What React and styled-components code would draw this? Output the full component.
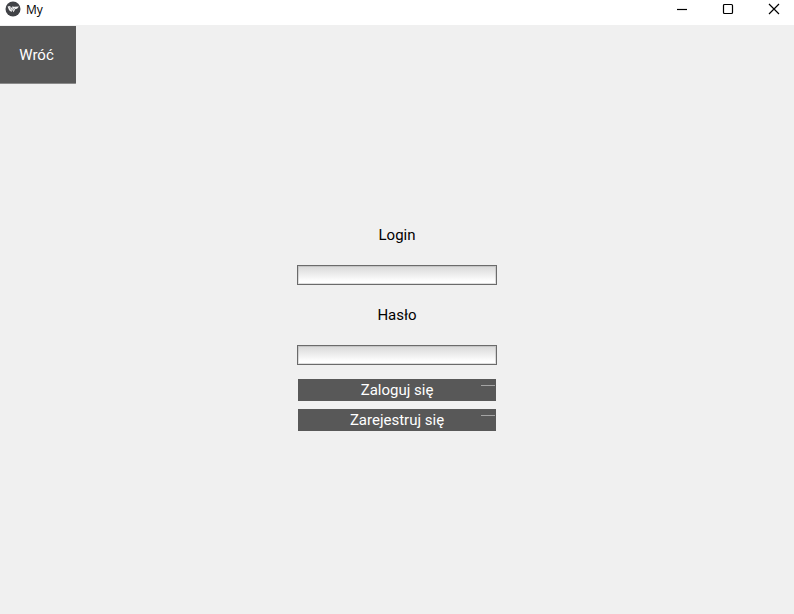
import React from "react";
import styled, { createGlobalStyle } from "styled-components";

const GlobalStyle = createGlobalStyle`
  * { box-sizing: border-box; }
  body {
    margin: 0;
    background: #f0f0f0;
    color: #000;
    font: 15px/20px Roboto, sans-serif;
  }
  button, input { font: inherit; }
`;

const Window = styled.div`
  display: flex;
  flex-direction: column;
  min-height: 100vh;
`;

const TitleBar = styled.header`
  display: flex;
  align-items: flex-start;
  justify-content: space-between;
  height: 25px;
  overflow: hidden;
  background: #fff;
`;

const AppName = styled.div`
  display: flex;
  align-items: center;
  gap: 5px;
  padding-left: 5px;
  font: 12px/20px "Open Sans", sans-serif;
`;

const Logo = styled.svg`
  display: block;
  width: 16px;
  height: 16px;
  margin-bottom: 2px;
`;

const WindowControls = styled.div`
  display: flex;
  margin-right: -3px;
`;

const WindowButton = styled.button`
  display: grid;
  place-items: center;
  width: 46px;
  height: 18px;
  padding: 0;
  border: 0;
  background: transparent;
`;

const ControlIcon = styled.svg`
  display: block;
  width: 12px;
  height: 12px;
  fill: none;
  stroke: #000;
  stroke-width: 1.2;
`;

const Main = styled.main`
  display: flex;
  flex: 1;
  flex-direction: column;
  align-items: center;
  padding-top: 1px;
`;

const BackButton = styled.button`
  align-self: flex-start;
  width: 76px;
  height: 58px;
  padding: 0 3px 0 0;
  border: 0;
  border-bottom: 1px solid #8a8a8a;
  border-radius: 0 0 1px 0;
  background: #585858;
  color: #fff;
`;

const LoginForm = styled.form`
  display: flex;
  flex-direction: column;
  width: 200px;
  margin-top: 131px;
`;

const Label = styled.label`
  height: 40px;
  line-height: 40px;
  text-align: center;
`;

const TextInput = styled.input`
  width: 100%;
  height: 20px;
  margin: 10px 0;
  padding: 0 4px;
  border: 1px solid #6b6b6b;
  border-radius: 0;
  outline: none;
  background: linear-gradient(#d8d8d8, #fff 85%);
  box-shadow: inset 0 0 0 1px rgba(150, 150, 150, 0.3);
`;

const Actions = styled.div`
  display: flex;
  flex-direction: column;
  gap: 8px;
  padding: 4px 1px;
`;

const ActionButton = styled.button`
  position: relative;
  height: 22px;
  padding: 0;
  border: 0;
  background: #585858;
  color: #fff;
  line-height: 22px;

  &::after {
    content: "";
    position: absolute;
    top: 6px;
    right: 1px;
    width: 14px;
    height: 1px;
    background: #a4a4a4;
  }
`;

export default function App() {
  return (
    <>
      <GlobalStyle />
      <Window>
        <TitleBar>
          <AppName>
            <Logo viewBox="0 0 16 16" aria-hidden="true">
              <circle cx="8" cy="8" r="7.5" fill="#404246" />
              <path d="M2.6 5.4 5 5l1.3 2L7.2 5.4l2 .3 4.8-.2-2 2.3-1.6.3L8.5 11.2 7.3 9l-.8 2-2.4-1.7Z" fill="#f4f4f4" />
              <path d="m4.8 5.8 1.7 3.6M7.2 6.2l1.2 3 1.4-2.4" fill="none" stroke="#74777a" strokeWidth=".6" />
            </Logo>
            <span>My</span>
          </AppName>
          <WindowControls>
            <WindowButton type="button" aria-label="Minimize">
              <ControlIcon viewBox="0 0 12 12"><path d="M1 6.5h10" /></ControlIcon>
            </WindowButton>
            <WindowButton type="button" aria-label="Maximize">
              <ControlIcon viewBox="0 0 12 12"><rect x="1.5" y="1.5" width="9" height="9" rx="1" /></ControlIcon>
            </WindowButton>
            <WindowButton type="button" aria-label="Close">
              <ControlIcon viewBox="0 0 12 12"><path d="m1 1 10 10M11 1 1 11" /></ControlIcon>
            </WindowButton>
          </WindowControls>
        </TitleBar>
        <Main>
          <BackButton type="button">Wróć</BackButton>
          <LoginForm onSubmit={(e) => e.preventDefault()}>
            <Label htmlFor="login">Login</Label>
            <TextInput id="login" type="text" />
            <Label htmlFor="password">Hasło</Label>
            <TextInput id="password" type="password" />
            <Actions>
              <ActionButton type="submit">Zaloguj się</ActionButton>
              <ActionButton type="button">Zarejestruj się</ActionButton>
            </Actions>
          </LoginForm>
        </Main>
      </Window>
    </>
  );
}
